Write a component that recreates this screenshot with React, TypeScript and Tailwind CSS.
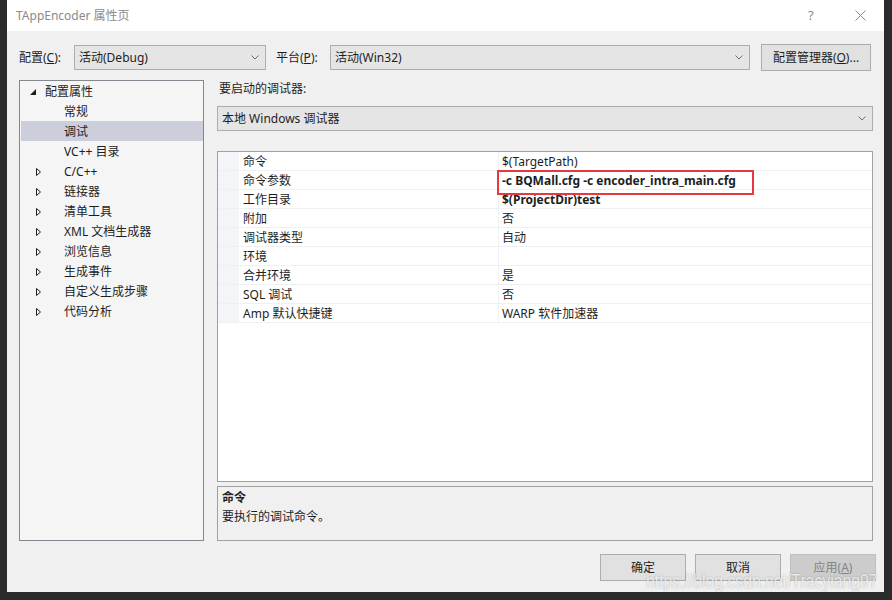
const FONT = "font-['Noto_Sans','Noto_Sans_CJK_SC',sans-serif]";

const tree = [
  { label: "配置属性", level: 0, open: true },
  { label: "常规", level: 1 },
  { label: "调试", level: 1, selected: true },
  { label: "VC++ 目录", level: 1 },
  { label: "C/C++", level: 1, closed: true },
  { label: "链接器", level: 1, closed: true },
  { label: "清单工具", level: 1, closed: true },
  { label: "XML 文档生成器", level: 1, closed: true },
  { label: "浏览信息", level: 1, closed: true },
  { label: "生成事件", level: 1, closed: true },
  { label: "自定义生成步骤", level: 1, closed: true },
  { label: "代码分析", level: 1, closed: true },
];

const props = [
  { name: "命令", value: "$(TargetPath)" },
  { name: "命令参数", value: "-c BQMall.cfg -c encoder_intra_main.cfg", bold: true },
  { name: "工作目录", value: "$(ProjectDir)test", bold: true },
  { name: "附加", value: "否" },
  { name: "调试器类型", value: "自动" },
  { name: "环境", value: "" },
  { name: "合并环境", value: "是" },
  { name: "SQL 调试", value: "否" },
  { name: "Amp 默认快捷键", value: "WARP 软件加速器" },
];

function Chevron() {
  return (
    <svg width="8" height="5" viewBox="0 0 8 5" className="shrink-0">
      <polyline points="0.5,0.5 4,4 7.5,0.5" fill="none" stroke="#6d6d6d" strokeWidth="1" />
    </svg>
  );
}

function Combo({ text, className }: { text: string; className: string }) {
  return (
    <div
      className={`flex items-center h-[25px] border border-[#adadad] bg-[#e5e5e5] pl-[4px] pr-[6px] ${className}`}
    >
      <span className="flex-1 truncate">{text}</span>
      <Chevron />
    </div>
  );
}

function Button({ children, disabled }: { children: React.ReactNode; disabled?: boolean }) {
  return (
    <div
      className={`flex items-center justify-center w-[86px] h-[27px] border ${
        disabled
          ? "bg-[#cccccc] border-[#bfbfbf] text-[#838383]"
          : "bg-[#e1e1e1] border-[#adadad] text-[#1e1e1e]"
      }`}
    >
      {children}
    </div>
  );
}

export default function App() {
  return (
    <div className={`w-[892px] h-[600px] bg-[#2b2b2b] overflow-hidden text-[12px] text-[#1e1e1e] ${FONT}`}>
      <div className="relative ml-[7px] w-[877px] h-[592px] bg-[#f0f0f0] flex flex-col">
        {/* title bar */}
        <div className="flex items-center h-[31px] bg-white pl-[9px] text-[#8a8a8a]">
          <span className="flex-1">TAppEncoder 属性页</span>
          <span className="w-[10px] text-[13px] text-[#8a8a8a] mr-[37px]">?</span>
          <svg width="11" height="11" viewBox="0 0 11 11" className="mr-[18px]">
            <path d="M0.5 0.5 L10.5 10.5 M10.5 0.5 L0.5 10.5" stroke="#8a8a8a" strokeWidth="1" />
          </svg>
        </div>

        {/* config row */}
        <div className="flex items-center h-[27px] mt-[13px] pl-[12px]">
          <span className="w-[55px]">
            配置(<span className="underline">C</span>):
          </span>
          <Combo text="活动(Debug)" className="w-[192px]" />
          <span className="w-[54px] ml-[10px]">
            平台(<span className="underline">P</span>):
          </span>
          <Combo text="活动(Win32)" className="w-[420px]" />
          <div className="flex items-center justify-center ml-[11px] w-[110px] h-[27px] bg-[#e1e1e1] border border-[#adadad]">
            配置管理器(<span className="underline">O</span>)...
          </div>
        </div>

        {/* main */}
        <div className="flex mt-[9px] pl-[12px]">
          <div className="w-[185px] h-[461px] bg-[#f5f5f5] border border-[#828790] flex flex-col">
            {tree.map((t) => (
              <div
                key={t.label}
                className={`flex items-center h-[20px] ml-[1px] pt-[2px] ${t.selected ? "bg-[#cccedb]" : ""}`}
              >
                {t.level === 0 ? (
                  <>
                    <svg width="6" height="6" viewBox="0 0 6 6" className="ml-[9px] mr-[9px]">
                      <polygon points="6,0 6,6 0,6" fill="#1e1e1e" />
                    </svg>
                    <span>{t.label}</span>
                  </>
                ) : (
                  <>
                    <span className="w-[29px] flex justify-end pr-[9px]">
                      {t.closed && (
                        <svg width="5" height="8" viewBox="0 0 5 8">
                          <polygon points="0.5,0.5 4.5,4 0.5,7.5" fill="none" stroke="#1e1e1e" strokeWidth="1" />
                        </svg>
                      )}
                    </span>
                    <span className="ml-[14px]">{t.label}</span>
                  </>
                )}
              </div>
            ))}
          </div>

          <div className="w-[656px] ml-[13px] flex flex-col">
            <div className="h-[16px] leading-[16px] pl-[2px] pt-[1px]">要启动的调试器:</div>
            <Combo text="本地 Windows 调试器" className="mt-[10px] w-[656px]" />

            {/* property grid */}
            <div className="relative mt-[20px] h-[331px] bg-white border border-[#a0a0a0]">
              {props.map((p) => (
                <div key={p.name} className="flex h-[19px] border-b border-[#eef0f3]">
                  <div className="w-[21px] bg-[#f3f5f8]" />
                  <div className="w-[260px] pl-[4px] pt-[2px] leading-[16px] border-r border-[#eef0f3]">{p.name}</div>
                  <div className={`flex-1 pl-[3px] pt-[2px] leading-[16px] whitespace-nowrap ${p.bold ? "font-bold" : ""}`}>
                    {p.value}
                  </div>
                </div>
              ))}
              <div className="absolute left-[279px] top-[18px] w-[257px] h-[25px] border-2 border-[#e8383d]" />
            </div>

            {/* description */}
            <div className="mt-[4px] h-[55px] border border-[#a0a0a0] bg-[#f0f0f0] pl-[4px] pt-[1px] leading-[19px]">
              <div className="font-bold">命令</div>
              <div>要执行的调试命令。</div>
            </div>
          </div>
        </div>

        {/* buttons */}
        <div className="flex justify-end gap-[9px] mt-[13px] pr-[8px]">
          <Button>确定</Button>
          <Button>取消</Button>
          <Button disabled>
            应用(<span className="underline">A</span>)
          </Button>
        </div>

        {/* watermark */}
        <div className="absolute left-[639px] top-[567px] text-[21px] leading-[27px] text-white/75 font-['Liberation_Sans',sans-serif] scale-x-[0.75] origin-left whitespace-nowrap [text-shadow:0_0_2px_rgba(0,0,0,0.3)]">
          https://blog.csdn.net/Tracyiang97
        </div>
      </div>
    </div>
  );
}
